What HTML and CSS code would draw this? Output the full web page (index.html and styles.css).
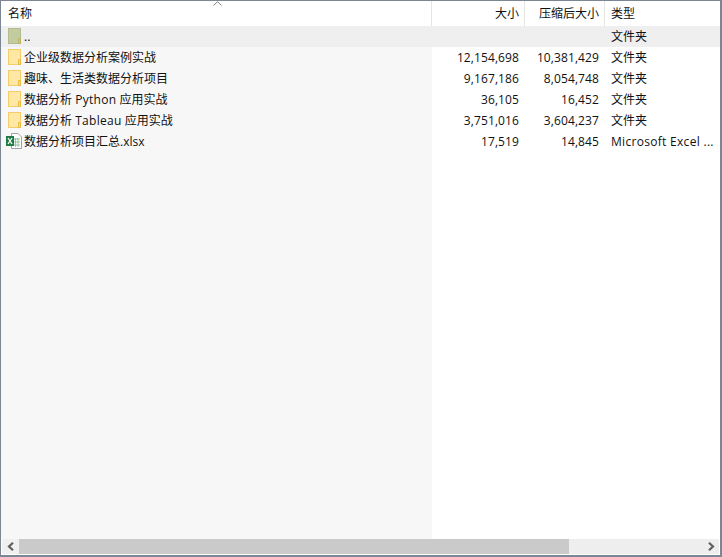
FILE: index.html
```html
<!DOCTYPE html>
<html lang="zh-CN">
<head>
<meta charset="utf-8">
<title>文件列表</title>
<link rel="stylesheet" href="styles.css">
</head>
<body>
<svg class="defs" width="0" height="0" aria-hidden="true">
  <symbol id="folder" viewBox="0 0 13 16">
    <rect x="0.5" y="0.5" width="12" height="15" fill="#ffe8a6" stroke="#f3cd68"/>
    <path d="M10.5 15.500V10.500H12.500V15.500Z" fill="#ffdd80" stroke="#e9bd45"/>
  </symbol>
  <symbol id="parent" viewBox="0 0 13 16">
    <rect x="0.5" y="0.5" width="12" height="15" fill="#c2cc9f" stroke="#b1bc90"/>
    <path d="M10.5 15.500V10.500H12.500V15.500Z" fill="#c9c98a" stroke="#bcb36a"/>
  </symbol>
</svg>
<main class="window">
  <header class="head">
    <div class="h name">名称<svg class="sort" width="9" height="5" viewBox="0 0 9 5"><path d="M0.5 4.5L4.5 0.7L8.5 4.5" fill="none" stroke="#7f7f7f"/></svg></div>
    <div class="h num sep">大小</div>
    <div class="h num sep">压缩后大小</div>
    <div class="h type sep">类型</div>
  </header>
  <section class="body">
    <div class="rows">
      <div class="row selected">
        <div class="name"><svg class="icon" width="13" height="16"><use href="#parent"/></svg><span>..</span></div>
        <div class="num"></div><div class="num"></div><div class="type">文件夹</div>
      </div>
      <div class="row">
        <div class="name"><svg class="icon" width="13" height="16"><use href="#folder"/></svg><span>企业级数据分析案例实战</span></div>
        <div class="num">12,154,698</div><div class="num">10,381,429</div><div class="type">文件夹</div>
      </div>
      <div class="row">
        <div class="name"><svg class="icon" width="13" height="16"><use href="#folder"/></svg><span>趣味、生活类数据分析项目</span></div>
        <div class="num">9,167,186</div><div class="num">8,054,748</div><div class="type">文件夹</div>
      </div>
      <div class="row">
        <div class="name"><svg class="icon" width="13" height="16"><use href="#folder"/></svg><span>数据分析 <span class="latin">Python</span> 应用实战</span></div>
        <div class="num">36,105</div><div class="num">16,452</div><div class="type">文件夹</div>
      </div>
      <div class="row">
        <div class="name"><svg class="icon" width="13" height="16"><use href="#folder"/></svg><span>数据分析 <span class="latin">Tableau</span> 应用实战</span></div>
        <div class="num">3,751,016</div><div class="num">3,604,237</div><div class="type">文件夹</div>
      </div>
      <div class="row">
        <div class="name"><svg class="icon xl" width="16" height="16" viewBox="0 0 16 16">
          <path d="M5.500 0.500H12L15.500 4V15.500H5.500Z" fill="#fff" stroke="#a0a0a0"/>
          <path d="M7 6H14M7 9H14M7 12H14M9.500 5V14M12 5V14" stroke="#8fc4a0" fill="none"/>
          <rect x="0" y="3" width="8" height="10" fill="#1f7a45"/>
          <path d="M2 5L6 11M6 5L2 11" stroke="#fff" stroke-width="1.300" fill="none"/>
        </svg><span>数据分析项目汇总.xlsx</span></div>
        <div class="num">17,519</div><div class="num">14,845</div><div class="type"><span class="latin">Microsoft Excel ...</span></div>
      </div>
    </div>
    <div class="scrollbar">
      <div class="arrow"><svg width="8" height="9" viewBox="0 0 8 9"><path d="M6 0.800L2 4.500L6 8.200" fill="none" stroke="#5f5f5f" stroke-width="2.200"/></svg></div>
      <div class="thumb"></div>
      <div class="track"></div>
      <div class="arrow right"><svg width="8" height="9" viewBox="0 0 8 9"><path d="M2 0.800L6 4.500L2 8.200" fill="none" stroke="#5f5f5f" stroke-width="2.200"/></svg></div>
    </div>
  </section>
</main>
</body>
</html>
```
FILE: styles.css
```css
* { box-sizing: border-box; }
html, body { margin: 0; padding: 0; height: 100%; }
body { background: #fff; }
.defs { position: absolute; }
.window {
  width: 722px;
  height: 557px;
  display: flex;
  flex-direction: column;
  border: solid #7c8793;
  border-width: 1px 2px 2px 1px;
  background: #fff;
  font: 12px/21px "Open Sans", "Noto Sans CJK SC", sans-serif;
  color: #111;
  overflow: hidden;
}
.head, .row {
  display: grid;
  grid-template-columns: 430px 93px 80px 1fr;
}
.head { height: 25px; background: #fff; }
.h { line-height: 25px; position: relative; }
.h.sep { border-left: 1px solid #e5e5e5; }
.h.name { padding-left: 7px; }
.sort { position: absolute; left: 212px; top: 0; }
.body { flex: 1; display: flex; flex-direction: column; min-height: 0; }
.rows {
  flex: 1;
  background: linear-gradient(to right, #f7f7f7 431px, #fff 431px);
}
.row { height: 21px; }
.row.selected { background: #efefef; }
.name { display: flex; align-items: flex-start; padding-left: 7px; white-space: nowrap; }
.icon { flex: none; margin: 2px 3px 0 0; }
.icon.xl { margin: 2px 2px 0 -2px; }
.latin { letter-spacing: 0.3px; }
.num { text-align: right; padding-right: 5px; letter-spacing: 0.1px; }
.h.num { padding-right: 5px; letter-spacing: 0; }
.type { padding-left: 7px; white-space: nowrap; }
.h.type { padding-left: 6px; }
.scrollbar { height: 15px; margin: 0 1px 1px; display: flex; background: #eee; flex: none; }
.arrow { width: 17px; display: flex; align-items: center; justify-content: center; flex: none; background: #f0f0f0; }
.thumb { width: 550px; background: #cacaca; }
.track { flex: 1; }
.arrow.right { background: #eee; }
```
